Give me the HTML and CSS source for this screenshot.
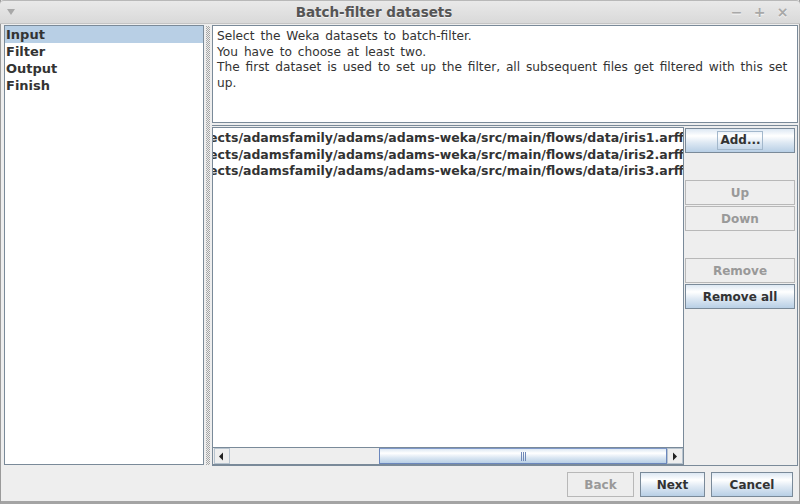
FILE: index.html
```html
<!DOCTYPE html>
<html>
<head>
<meta charset="utf-8">
<link rel="stylesheet" href="styles.css">
</head>
<body>
<div class="window">
  <div class="titlebar">
    <span class="menu-tri"></span>
    <span class="title">Batch-filter datasets</span>
    <span class="ctrls"><span class="ctrl">&minus;</span><span class="ctrl">+</span><span class="ctrl">&times;</span></span>
  </div>
  <div class="main">
    <ul class="steps">
      <li class="sel">Input</li>
      <li>Filter</li>
      <li>Output</li>
      <li>Finish</li>
    </ul>
    <div class="divider"></div>
    <div class="right">
      <div class="desc">Select the Weka datasets to batch-filter.<br>You have to choose at least two.<br>The first dataset is used to set up the filter, all subsequent files get filtered with this set<br>up.</div>
      <div class="lower">
        <div class="scrollpane">
          <div class="files">
            <div class="file">ects/adamsfamily/adams/adams-weka/src/main/flows/data/iris1.arff</div>
            <div class="file">ects/adamsfamily/adams/adams-weka/src/main/flows/data/iris2.arff</div>
            <div class="file">ects/adamsfamily/adams/adams-weka/src/main/flows/data/iris3.arff</div>
          </div>
          <div class="hscroll">
            <div class="arrow"><svg width="6" height="9" viewBox="0 0 6 9"><path d="M4 0.5 L4 8.5 L0 4.5 Z" fill="#222"/></svg></div>
            <div class="track">
              <div class="thumb"><span class="grip"></span></div>
            </div>
            <div class="arrow"><svg width="6" height="9" viewBox="0 0 6 9"><path d="M1 0.5 L1 8.5 L5 4.5 Z" fill="#222"/></svg></div>
          </div>
        </div>
        <div class="btncol">
          <button class="btn"><span class="focus">Add...</span></button>
          <span class="slot"></span>
          <button class="btn dis">Up</button>
          <button class="btn dis">Down</button>
          <span class="slot"></span>
          <button class="btn dis">Remove</button>
          <button class="btn">Remove all</button>
        </div>
      </div>
    </div>
  </div>
  <div class="footer">
    <button class="btn dis back">Back</button>
    <button class="btn next">Next</button>
    <button class="btn cancel">Cancel</button>
  </div>
</div>
</body>
</html>
```
FILE: styles.css
```css
* { box-sizing: border-box; }
html, body { margin: 0; padding: 0; }
body {
  width: 800px;
  height: 504px;
  overflow: hidden;
  font-family: "DejaVu Sans", sans-serif;
  font-size: 12px;
  color: #333333;
  background: #eeeeee;
}
.window {
  width: 800px;
  height: 504px;
  display: flex;
  flex-direction: column;
  border: 1px solid #9a9a9a;
  border-top: none;
  border-bottom: 3px solid #a4a4a4;
  background: #eeeeee;
}
.titlebar {
  height: 24px;
  flex: none;
  display: flex;
  align-items: center;
  position: relative;
  background: linear-gradient(#e9e9e9, #d9d9d9);
  border-bottom: 1px solid #c4c4c4;
  margin: 0 -1px;
  border-radius: 4px 4px 0 0;
  border-top: 1px solid #b8b8b8;
}
.menu-tri {
  width: 0; height: 0;
  margin-left: 7px;
  border-left: 4px solid transparent;
  border-right: 4px solid transparent;
  border-top: 6px solid #a8a8a8;
}
.title {
  flex: 1;
  text-align: center;
  font-weight: bold;
  font-size: 13.5px;
  color: #555555;
  text-shadow: 0 1px 0 #f4f4f4;
  margin-left: 8px;
}
.ctrls { display: flex; gap: 0; margin-right: 6px; }
.ctrl {
  width: 23px;
  text-align: center;
  color: #a8a8a8;
  font-weight: bold;
  font-size: 14px;
  text-shadow: 0 1px 0 #f6f6f6;
}
.main {
  display: flex;
  padding: 1px 0 0 3px;
  height: 442px;
  flex: none;
}
.steps {
  list-style: none;
  margin: 0;
  padding: 0;
  width: 200px;
  height: 440px;
  border: 1px solid #7a8a99;
  background: #ffffff;
  font-weight: bold;
  font-size: 13px;
  color: #333333;
}
.steps li {
  height: 17px;
  line-height: 17px;
  padding-left: 1px;
}
.steps li.sel { background: #b8cfe5; }
.divider {
  width: 8px;
  height: 440px;
  background-image: conic-gradient(#a6a6a6 0 25%, transparent 0 50%, #a6a6a6 0 75%, transparent 0);
  background-size: 2px 2px;
  background-clip: content-box;
  padding: 1px 2px 0 2px;
}
.right {
  width: 586px;
  display: flex;
  flex-direction: column;
  gap: 2px;
}
.desc {
  height: 98px;
  border: 1px solid #7a8a99;
  background: #ffffff;
  padding: 3px 0 0 4px;
  line-height: 15.5px;
  font-size: 12.2px;
  word-spacing: 2px;
  color: #333333;
  white-space: nowrap;
  overflow: hidden;
}
.lower {
  height: 341px;
  border: 1px solid #7a8a99;
  border-left: none;
  display: flex;
  padding-top: 1px;
}
.scrollpane {
  width: 472px;
  height: 338px;
  border: 1px solid #7a8a99;
  background: #ffffff;
  display: flex;
  flex-direction: column;
  overflow: hidden;
}
.files {
  flex: 1;
  overflow: hidden;
  display: flex;
  flex-direction: column;
  align-items: flex-end;
  padding-top: 2px;
  font-weight: bold;
  font-size: 12.5px;
  color: #333333;
}
.file {
  white-space: nowrap;
  height: 16.5px;
  line-height: 16.5px;
  margin-right: -1px;
}
.hscroll {
  height: 17px;
  flex: none;
  display: flex;
  border-top: 1px solid #7a8a99;
  background: #eeeeee;
  padding: 0 0 0 1px;
}
.arrow {
  width: 16px;
  height: 16px;
  flex: none;
  display: flex;
  align-items: center;
  justify-content: center;
  border: 1px solid #b8c4cf;
  background: #eeeeee;
}
.track {
  flex: 1;
  display: flex;
  justify-content: flex-end;
  background: #eeeeee;
}
.thumb {
  width: 288px;
  height: 16px;
  border: 1px solid #6b87bd;
  border-top-color: #7f98c8;
  background: linear-gradient(#dde8f3 0%, #ffffff 30%, #dde8f3 60%, #b8cfe5 100%);
  display: flex;
  align-items: center;
  justify-content: center;
}
.grip {
  width: 5px;
  height: 9px;
  background: repeating-linear-gradient(90deg, #6f88b8 0 1px, transparent 1px 2px);
}
.btncol {
  width: 112px;
  display: grid;
  grid-template-rows: repeat(7, 25px);
  row-gap: 1px;
  padding: 1px 1px 0 1px;
  align-content: start;
}
.btn {
  font-family: "DejaVu Sans", sans-serif;
  font-weight: bold;
  font-size: 12px;
  color: #333333;
  height: 25px;
  margin: 0;
  padding: 0;
  border: 1px solid #7a8a99;
  background: linear-gradient(#dde8f3 0%, #ffffff 30%, #dde8f3 60%, #b8cfe5 100%);
  display: flex;
  align-items: center;
  justify-content: center;
}
.btn.dis {
  color: #999999;
  border-color: #b8b8b8;
  background: #eeeeee;
}
.focus {
  border: 1px solid #a3b8cc;
  padding: 1px 1px 2px 2px;
  line-height: 14px;
}
.footer {
  flex: 1;
  display: flex;
  justify-content: flex-end;
  align-items: flex-start;
  padding: 6px 6px 0 0;
  gap: 6px;
}
.footer .btn { height: 25px; }
.back { width: 67px; }
.next { width: 65px; }
.cancel { width: 82px; }
```
